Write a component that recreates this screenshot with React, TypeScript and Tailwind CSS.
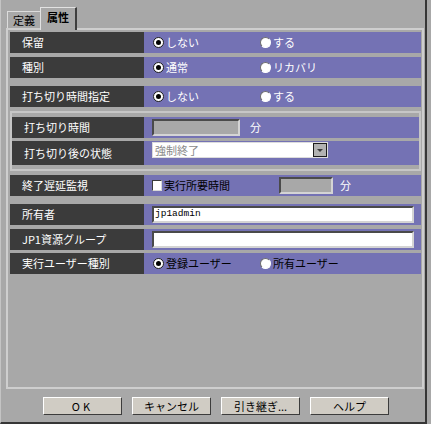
import type { ReactNode } from "react";

const label = "flex shrink-0 items-center bg-[#3b3b3b] pl-[12px] text-[11px] text-white";
const cell = "flex flex-1 items-center bg-[#7472b4] text-[11px]";
const sunken =
  "border-2 border-t-[#4a4a4a] border-l-[#4a4a4a] border-r-[#d4d4d4] border-b-[#d4d4d4]";

function Radio({ checked }: { checked?: boolean }) {
  return (
    <span
      className={
        "flex h-[11px] w-[11px] shrink-0 items-center justify-center rounded-full border bg-white " +
        (checked
          ? "border-[#1e1e1e]"
          : "border-t-[#6e6e6e] border-l-[#6e6e6e] border-r-white border-b-white")
      }
    >
      {checked && <span className="h-[5px] w-[5px] rounded-full bg-black" />}
    </span>
  );
}

function RadioPair({ a, b, dark }: { a: string; b: string; dark?: boolean }) {
  const text = dark ? "text-black" : "text-white";
  return (
    <div className="flex items-center pl-[9px]">
      <div className="flex w-[107px] items-center gap-[2px]">
        <Radio checked />
        <span className={text}>{a}</span>
      </div>
      <div className="flex items-center gap-[2px]">
        <Radio />
        <span className={text}>{b}</span>
      </div>
    </div>
  );
}

function Row({
  name,
  children,
  className = "",
  labelW = "w-[134px]",
  h = "h-[21px]",
}: {
  name: string;
  children?: ReactNode;
  className?: string;
  labelW?: string;
  h?: string;
}) {
  return (
    <div className={`flex ${h} ${className}`}>
      <div className={`${label} ${labelW}`}>{name}</div>
      <div className={cell}>{children}</div>
    </div>
  );
}

function TextField({ value }: { value?: string }) {
  return (
    <div className={`${sunken} ml-[8px] flex h-[17px] w-[262px] items-center bg-white pl-[1px]`}>
      <span className="font-['Liberation_Mono',monospace] text-[9.5px] text-black">{value}</span>
    </div>
  );
}

function Button({ children, wide }: { children: ReactNode; wide?: boolean }) {
  return (
    <div
      className={
        "flex h-[18px] w-[79px] items-center justify-center border border-t-white border-l-white border-r-[#3c3c3c] border-b-[#3c3c3c] bg-[#d0ccc4] text-[11px] text-black " +
        (wide ? "tracking-[3px]" : "")
      }
    >
      {children}
    </div>
  );
}

export default function App() {
  return (
    <div className="h-[424px] w-[431px] overflow-hidden bg-[#a8a8a8] font-['Noto_Sans_CJK_JP',sans-serif]">
      <div className="flex h-[424px] w-[427px] flex-col border-b-2 border-l border-r-2 border-b-[#363636] border-l-[#c4c4c4] border-r-[#363636]">
        {/* tabs */}
        <div className="flex h-[28px] shrink-0 items-end pl-[6px]">
          <div className="flex h-[17px] w-[33px] items-center justify-center border-l border-t border-[#dcdcdc] text-[11px] text-black">
            定義
          </div>
          <div className="relative z-10 -mb-[2px] flex h-[23px] w-[37px] items-start justify-center border-l border-r-2 border-t border-l-[#e2e2e2] border-t-[#e2e2e2] border-r-[#3e3e3e] bg-[#a8a8a8] pt-[1px] text-[11px] font-bold text-black">
            属性
          </div>
        </div>

        {/* panel */}
        <div className="ml-[5px] flex h-[361px] w-[418px] shrink-0 flex-col border-2 border-[#cecece] pl-[2px] pr-[1px] pt-[2px]">
          <Row name="保留">
            <RadioPair a="しない" b="する" />
          </Row>
          <Row name="種別" className="mt-[4px]">
            <RadioPair a="通常" b="リカバリ" />
          </Row>
          <Row name="打ち切り時間指定" className="mt-[8px]">
            <RadioPair a="しない" b="する" />
          </Row>

          <div className="mt-[4px] flex h-[60px] flex-col border-2 border-[#c6c6c6] pb-[4px] pt-[4px]">
            <Row name="打ち切り時間" labelW="w-[132px]">
              <div className="flex items-center pl-[8px]">
                <div className={`${sunken} h-[17px] w-[88px] bg-[#a8a8a8]`} />
                <span className="ml-[10px] text-white">分</span>
              </div>
            </Row>
            <div className="mt-[3px] flex h-[24px]">
              <div className={`${label} w-[132px]`}>打ち切り後の状態</div>
              <div className="flex flex-1 items-start bg-[#7472b4] pl-[8px] pt-[1px] text-[11px]">
                <div className="flex h-[16px] w-[176px] items-center border border-[#dcdcdc] bg-white">
                  <span className="flex-1 pl-[2px] text-[#8a8a8a]">強制終了</span>
                  <div className="mr-[0px] flex h-[14px] w-[14px] flex-col items-center justify-center border border-[#1c1c1c] bg-[#b2b2b2]">
                    <span className="h-0 w-0 border-l-[3px] border-r-[3px] border-t-[3px] border-l-transparent border-r-transparent border-t-[#3a3a3a]" />
                  </div>
                </div>
              </div>
            </div>
          </div>

          <Row name="終了遅延監視" className="mt-[4px]">
            <div className="flex items-center pl-[8px]">
              <div className="flex w-[127px] items-center gap-[2px]">
                <span className="h-[11px] w-[10px] border border-t-[#3a3a3a] border-l-[#3a3a3a] border-r-[#d8d8d8] border-b-[#d8d8d8] bg-white" />
                <span className="text-black">実行所要時間</span>
              </div>
              <div className={`${sunken} h-[17px] w-[54px] bg-[#a8a8a8]`} />
              <span className="ml-[7px] text-white">分</span>
            </div>
          </Row>
          <Row name="所有者" className="mt-[8px]">
            <TextField value="jp1admin" />
          </Row>
          <Row name="JP1資源グループ" className="mt-[4px]">
            <TextField />
          </Row>
          <Row name="実行ユーザー種別" className="mt-[3px]">
            <RadioPair a="登録ユーザー" b="所有ユーザー" dark />
          </Row>
        </div>

        {/* buttons */}
        <div className="mt-[8px] flex gap-[10px] pl-[42px]">
          <Button wide>OK</Button>
          <Button>キャンセル</Button>
          <Button>引き継ぎ...</Button>
          <Button>ヘルプ</Button>
        </div>
      </div>
    </div>
  );
}
